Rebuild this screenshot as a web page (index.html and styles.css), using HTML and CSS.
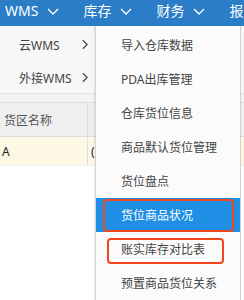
FILE: index.html
```html
<!DOCTYPE html>
<html lang="zh">
<head>
<meta charset="utf-8">
<link rel="stylesheet" href="styles.css">
</head>
<body>
<nav class="topbar">
  <div class="nav-item">WMS<svg class="caret" viewBox="0 0 12 7"><path d="M1 1 L6 6 L11 1" /></svg></div>
  <div class="nav-item">库存<svg class="caret" viewBox="0 0 12 7"><path d="M1 1 L6 6 L11 1" /></svg></div>
  <div class="nav-item">财务<svg class="caret" viewBox="0 0 12 7"><path d="M1 1 L6 6 L11 1" /></svg></div>
  <div class="nav-item">报</div>
</nav>
<main class="content">
  <div class="spacer"></div>
  <div class="strip"></div>
  <div class="table">
    <div class="row head"><div class="cell c1">货区名称</div><div class="cell c2"></div></div>
    <div class="row data"><div class="cell c1">A</div><div class="cell c2">(</div></div>
  </div>
</main>
<ul class="submenu">
  <li>云WMS<svg class="arrow" viewBox="0 0 7 12"><path d="M1 1 L6 6 L1 11" /></svg></li>
  <li>外接WMS<svg class="arrow" viewBox="0 0 7 12"><path d="M1 1 L6 6 L1 11" /></svg></li>
</ul>
<ul class="dropdown">
  <li>导入仓库数据</li>
  <li>PDA出库管理</li>
  <li>仓库货位信息</li>
  <li>商品默认货位管理</li>
  <li>货位盘点</li>
  <li class="active">货位商品状况</li>
  <li>账实库存对比表</li>
  <li>预置商品货位关系</li>
</ul>
<div class="mark mark-a"></div>
<div class="mark mark-b"></div>
</body>
</html>
```

FILE: styles.css
```css
html, body {
  margin: 0;
  padding: 0;
  background: #ffffff;
  font-family: "Noto Sans", "Noto Sans CJK SC", sans-serif;
  overflow: hidden;
  width: 244px;
  height: 300px;
}
.topbar {
  height: 26px;
  background: #2a7dc6;
  display: flex;
  align-items: flex-start;
  padding-left: 5px;
  gap: 24px;
  color: #ffffff;
  font-size: 14px;
  line-height: 22px;
  white-space: nowrap;
}
.nav-item {
  display: flex;
  align-items: center;
  gap: 9px;
}
.caret {
  width: 12px;
  height: 7px;
  fill: none;
  stroke: #ffffff;
  stroke-width: 1.3;
}
.content {
  display: flex;
  flex-direction: column;
}
.spacer {
  height: 67px;
  background: #f7f7f7;
}
.strip {
  height: 8px;
  background: #f3f3f3;
  border-top: 1px solid #e2e2e2;
}
.table {
  display: flex;
  flex-direction: column;
  font-size: 12px;
}
.row {
  display: flex;
}
.row.head {
  height: 33px;
  background: #efefef;
  border-top: 1px solid #dcdcdc;
  border-bottom: 1px solid #dcdcdc;
  color: #555;
}
.row.data {
  height: 28px;
  background: #fdf8e5;
  color: #222;
  border-bottom: 1px solid #eee;
}
.cell {
  display: flex;
  align-items: center;
}
.c1 {
  width: 88px;
  padding-left: 4px;
  box-sizing: border-box;
  border-right: 1px solid #dddddd;
}
.row.data .c1 { padding-left: 2px; }
.c2 {
  padding-left: 3px;
}
.submenu {
  position: absolute;
  left: 0;
  top: 26px;
  width: 95px;
  margin: 0;
  padding: 2px 0 0;
  list-style: none;
  background: #f7f7f7;
  font-size: 12px;
  color: #444;
  height: 65px;
  box-sizing: border-box;
}
.submenu li {
  height: 33px;
  display: flex;
  align-items: center;
  padding-left: 19px;
  position: relative;
}
.arrow {
  position: absolute;
  left: 82px;
  width: 6px;
  height: 11px;
  fill: none;
  stroke: #444;
  stroke-width: 1.4;
}
.dropdown {
  position: absolute;
  left: 95px;
  top: 26px;
  width: 146px;
  height: 274px;
  margin: 0;
  padding: 2px 0 0;
  list-style: none;
  background: #fbfbfb;
  border-left: 1px solid #d4d4d4;
  border-right: 1px solid #d0d0d0;
  box-shadow: -1px 0 2px rgba(0,0,0,0.08);
  font-size: 12px;
  color: #444;
  box-sizing: border-box;
  overflow: hidden;
}
.dropdown li {
  height: 34px;
  display: flex;
  align-items: center;
  padding-left: 25px;
  white-space: nowrap;
}
.dropdown li.active {
  background: #1f8fe6;
  color: #ffffff;
}
.mark {
  position: absolute;
  border: 2px solid #f0461c;
  border-radius: 4px;
  box-sizing: border-box;
}
.mark-a {
  left: 103px;
  top: 199px;
  width: 131px;
  height: 33px;
}
.mark-b {
  left: 107px;
  top: 238px;
  width: 117px;
  height: 26px;
}
```
